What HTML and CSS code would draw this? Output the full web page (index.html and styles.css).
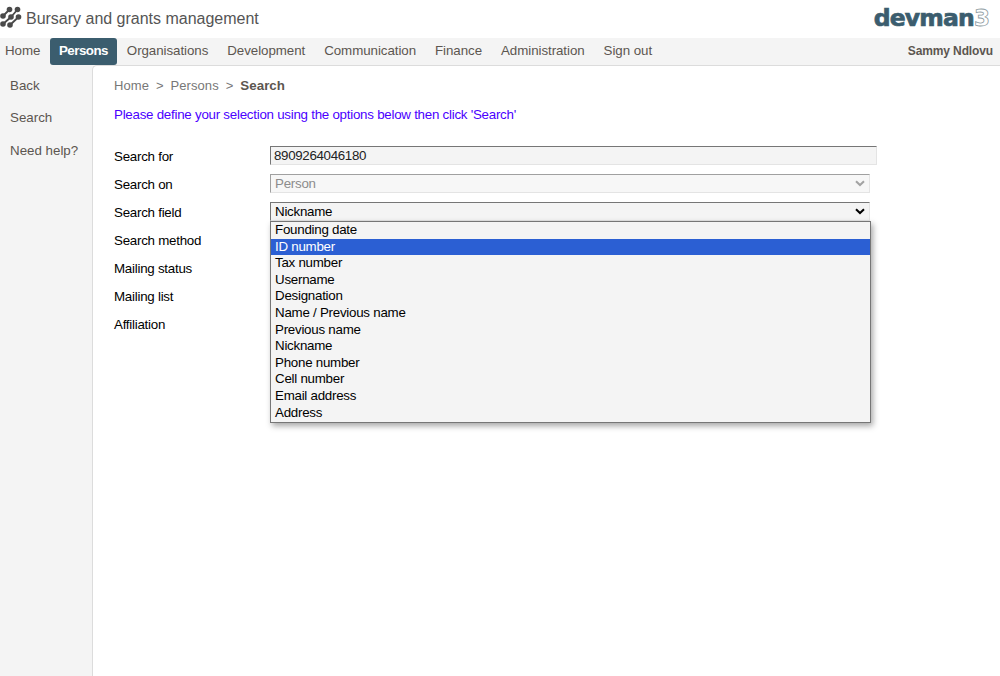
FILE: index.html
```html
<!DOCTYPE html>
<html lang="en">
<head>
<meta charset="utf-8">
<title>Search</title>
<link rel="stylesheet" href="styles.css">
</head>
<body>
<header class="top">
  <div class="brand">
    <svg class="mark" width="22" height="22" viewBox="0 0 22 22" aria-hidden="true">
      <g fill="none" stroke="#4a4a4a" stroke-width="1.8" stroke-linecap="round">
        <path d="M3 10 L9.5 3.5"/>
        <path d="M3 18 L11 11 L17.5 3.5"/>
        <path d="M10 19 L18.5 11"/>
      </g>
      <g fill="#4a4a4a">
        <circle cx="3" cy="10" r="2.8"/><circle cx="9.5" cy="3.5" r="2.8"/>
        <circle cx="3" cy="18" r="2.8"/><circle cx="11" cy="11" r="2.8"/><circle cx="17.5" cy="3.5" r="2.8"/>
        <circle cx="10" cy="19" r="2.8"/><circle cx="18.5" cy="11" r="2.8"/>
      </g>
    </svg>
    <span class="title">Bursary and grants management</span>
  </div>
  <div class="logo"><span class="logo-name">devman</span><span class="logo-num">3</span></div>
</header>
<nav class="nav">
  <a class="nav-item">Home</a>
  <a class="nav-item active">Persons</a>
  <a class="nav-item">Organisations</a>
  <a class="nav-item">Development</a>
  <a class="nav-item">Communication</a>
  <a class="nav-item">Finance</a>
  <a class="nav-item">Administration</a>
  <a class="nav-item">Sign out</a>
  <span class="user">Sammy Ndlovu</span>
</nav>
<div class="body">
  <aside class="side">
    <a class="side-item">Back</a>
    <a class="side-item">Search</a>
    <a class="side-item">Need help?</a>
  </aside>
  <main class="main">
    <div class="crumbs"><span>Home</span><span class="sep">&gt;</span><span>Persons</span><span class="sep">&gt;</span><b>Search</b></div>
    <p class="hint">Please define your selection using the options below then click 'Search'</p>
    <div class="form">
      <div class="row"><span class="label">Search for</span><div class="input">8909264046180</div></div>
      <div class="row"><span class="label">Search on</span>
        <div class="select disabled"><span>Person</span>
          <svg class="chev" width="10" height="7" viewBox="0 0 10 7"><path d="M1 1.2 L5 5 L9 1.2" fill="none" stroke="#a3a3a3" stroke-width="2"/></svg>
        </div>
      </div>
      <div class="row"><span class="label">Search field</span>
        <div class="select open"><span>Nickname</span>
          <svg class="chev" width="10" height="7" viewBox="0 0 10 7"><path d="M1 1.2 L5 5 L9 1.2" fill="none" stroke="#000" stroke-width="2"/></svg>
          <ul class="menu">
            <li>Founding date</li>
            <li class="hl">ID number</li>
            <li>Tax number</li>
            <li>Username</li>
            <li>Designation</li>
            <li>Name / Previous name</li>
            <li>Previous name</li>
            <li>Nickname</li>
            <li>Phone number</li>
            <li>Cell number</li>
            <li>Email address</li>
            <li>Address</li>
          </ul>
        </div>
      </div>
      <div class="row"><span class="label">Search method</span></div>
      <div class="row"><span class="label">Mailing status</span></div>
      <div class="row"><span class="label">Mailing list</span></div>
      <div class="row"><span class="label">Affiliation</span></div>
    </div>
  </main>
</div>
</body>
</html>
```
FILE: styles.css
```css
* { box-sizing: border-box; }
html, body { margin: 0; padding: 0; height: 100%; overflow: hidden; }
body {
  display: flex;
  flex-direction: column;
  background: #f4f4f4;
  font-family: "Liberation Sans", Arial, sans-serif;
  font-size: 13.33px;
  color: #000;
}
.top {
  height: 38px;
  flex: none;
  background: #fff;
  display: flex;
  align-items: center;
  justify-content: space-between;
  padding: 0 10px 1px 0;
}
.brand { display: flex; align-items: center; gap: 4px; }
.mark { display: block; margin-top: -3px; }
.title { font-size: 16px; color: #555; letter-spacing: -0.01px; }
.logo { display: flex; align-items: baseline; line-height: 24px; margin-top: -2px; }
.logo-name {
  font-family: "DejaVu Sans", sans-serif;
  font-weight: 700;
  font-size: 23.5px;
  letter-spacing: -0.8px;
  color: #3b5d6e;
  -webkit-text-stroke: 0.7px #3b5d6e;
}
.logo-num {
  font-family: "DejaVu Sans", sans-serif;
  font-weight: 700;
  font-size: 23px;
  color: #fff;
  -webkit-text-stroke: 0.8px #8d9aa1;
}
.nav {
  height: 27px;
  flex: none;
  display: flex;
  align-items: flex-start;
  background: #f4f4f4;
}
.nav-item {
  height: 27px;
  padding: 5px 5px 0;
  margin-right: 9px;
  color: #5c5650;
  line-height: 16px;
  letter-spacing: -0.06px;
}
.nav-item:first-child { margin-right: 4.6px; }
.active {
  background: #3b5d6e;
  color: #fff;
  font-weight: 700;
  letter-spacing: -0.5px;
  border-radius: 3px;
  padding: 5px 9px 0;
  margin-right: 4.8px;
}
.user {
  margin-left: auto;
  padding: 5px 7px 0 0;
  font-size: 12px;
  font-weight: 700;
  line-height: 16px;
  color: #5c5650;
  letter-spacing: -0.13px;
}
.body { flex: 1; display: flex; min-height: 0; }
.side {
  width: 92px;
  flex: none;
  display: flex;
  flex-direction: column;
  padding: 12.5px 0 0 10px;
  gap: 16px;
  background: #f4f4f4;
}
.side-item { color: #5c5650; line-height: 16.5px; }
.main {
  flex: 1;
  background: #fff;
  border-left: 1px solid #dcdcdc;
  border-top: 1px solid #dcdcdc;
  border-top-left-radius: 5px;
  padding: 12px 0 0 21px;
}
.crumbs {
  display: flex;
  gap: 7px;
  font-size: 13px;
  line-height: 16px;
  color: #777;
  letter-spacing: 0.06px;
}
.crumbs b { color: #5c5650; font-size: 13.33px; letter-spacing: 0.02px; }
.sep { color: #777; }
.hint {
  margin: 13px 0 0;
  line-height: 16px;
  color: #4b00ff;
  letter-spacing: -0.25px;
}
.form { margin-top: 23px; display: flex; flex-direction: column; letter-spacing: -0.25px; }
.row { height: 28px; display: flex; align-items: flex-start; }
.label { width: 156px; flex: none; line-height: 16px; padding-top: 3px; }
.input {
  width: 607px;
  height: 19px;
  background: #f4f4f4;
  border: 1px solid #e4e4e4;
  border-top-color: #767676;
  border-left-color: #767676;
  padding-left: 3px;
  line-height: 17px;
  color: #222;
  letter-spacing: -0.33px;
}
.select {
  position: relative;
  width: 600px;
  height: 19px;
  background: #f4f4f4;
  border: 1px solid #e4e4e4;
  border-top-color: #767676;
  border-left-color: #767676;
  padding-left: 4px;
  line-height: 17px;
}
.select.disabled { color: #8c8c8c; background: #f7f7f7; border-top-color: #a0a0a0; border-left-color: #a0a0a0; }
.chev { position: absolute; right: 4px; top: 5px; }
.menu {
  position: absolute;
  left: -1px;
  top: 18px;
  width: 601px;
  height: 202px;
  margin: 0;
  padding: 0;
  list-style: none;
  background: #f4f4f4;
  border: 1px solid #767676;
  box-shadow: 2px 3px 6px rgba(0, 0, 0, 0.35);
  z-index: 2;
}
.menu li { height: 16.6px; line-height: 16.6px; padding-left: 4px; }
.menu .hl { background: #2b5fd3; color: #fff; }
```
